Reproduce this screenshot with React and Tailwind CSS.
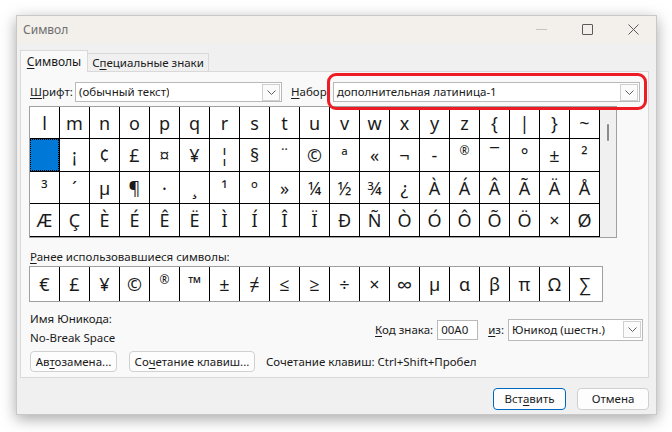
import React from "react";

const rows = [
  ["l", "m", "n", "o", "p", "q", "r", "s", "t", "u", "v", "w", "x", "y", "z", "{", "|", "}", "~"],
  ["", "¡", "¢", "£", "¤", "¥", "¦", "§", "¨", "©", "ª", "«", "¬", "-", "®", "¯", "°", "±", "²"],
  ["³", "´", "µ", "¶", "·", "¸", "¹", "º", "»", "¼", "½", "¾", "¿", "À", "Á", "Â", "Ã", "Ä", "Å"],
  ["Æ", "Ç", "È", "É", "Ê", "Ë", "Ì", "Í", "Î", "Ï", "Ð", "Ñ", "Ò", "Ó", "Ô", "Õ", "Ö", "×", "Ø"],
];

const recent = ["€", "£", "¥", "©", "®", "™", "±", "≠", "≤", "≥", "÷", "×", "∞", "µ", "α", "β", "π", "Ω", "∑"];

const rowHeights = ["h-[32px]", "h-[33px]", "h-[32px]", "h-[33px]"];

function Chevron() {
  return (
    <svg width="9" height="5" viewBox="0 0 9 5">
      <path d="M0.5 0.5L4.5 4.5L8.5 0.5" stroke="#606060" fill="none" strokeWidth="1" />
    </svg>
  );
}

function Select({ text, className }) {
  return (
    <div className={`h-[20px] border border-[#b9b9b9] bg-white flex items-center ${className}`}>
      <span className="pl-[3px] truncate">{text}</span>
      <div className="ml-auto mr-px h-[17px] w-[18px] border border-[#cfcfcf] bg-[#fbfbfb] flex items-center justify-center">
        <Chevron />
      </div>
    </div>
  );
}

function Btn({ children, className }) {
  return (
    <div className={`h-[21px] border border-[#d0d0d0] bg-[#fdfdfd] rounded-[4px] flex items-center justify-center ${className}`}>
      {children}
    </div>
  );
}

// small raised glyphs (Segoe UI draws these small)
function Glyph({ ch }) {
  if (ch === "®") return <span className="text-[12px] -translate-y-[4px]">®</span>;
  if (ch === "™") return <span className="text-[17px] font-bold -translate-y-[2px]">™</span>;
  if (ch === "∞") return <span className="text-[22px]">∞</span>;
  return ch;
}

export default function App() {
  return (
    <div
      className="w-[672px] h-[432px] bg-white pt-[15px] pl-[16px] text-[11.5px] text-[#1a1a1a]"
      style={{ fontFamily: '"Noto Sans", "Open Sans", sans-serif' }}
    >
      <div className="w-[641px] h-[400px] bg-[#f0f0f0] border border-[#c8c8c8] shadow-[0_4px_14px_rgba(0,0,0,0.35)] flex flex-col">
        {/* title bar */}
        <div className="h-[27px] bg-[#f3f0eb] flex items-center pl-[6px]">
          <span className="text-[#6d6d6d] text-[12px]">Символ</span>
          <div className="ml-auto flex items-center">
            <div className="w-[46px] flex justify-center">
              <div className="w-[11px] h-px bg-[#c4c4c4]" />
            </div>
            <div className="w-[46px] flex justify-center">
              <div className="w-[11px] h-[11px] border border-[#5a5a5a] rounded-[1px]" />
            </div>
            <div className="w-[46px] flex justify-center">
              <svg width="11" height="11" viewBox="0 0 11 11">
                <path d="M0.5 0.5L10.5 10.5M10.5 0.5L0.5 10.5" stroke="#5a5a5a" strokeWidth="1" />
              </svg>
            </div>
          </div>
        </div>

        {/* tabs */}
        <div className="mt-[7px] ml-[3px] flex items-end">
          <div className="h-[22px] w-[68px] bg-[#f9f9f9] border border-b-0 border-[#d9d9d9] flex items-center justify-center relative z-10 -mb-px text-[12px]">
            <span><span className="underline underline-offset-2">С</span>имволы</span>
          </div>
          <div className="h-[18px] w-[121px] bg-[#f0f0f0] border border-b-0 border-l-0 border-[#d9d9d9] flex items-center justify-center">
            <span>С<span className="underline underline-offset-2">п</span>ециальные знаки</span>
          </div>
        </div>

        {/* panel */}
        <div className="ml-[3px] w-[629px] h-[307px] bg-[#f9f9f9] border border-[#d9d9d9] pl-[8px] flex flex-col">
          <div className="mt-[10px] flex items-center">
            <span className="w-[46px] pl-px"><span className="underline underline-offset-2">Ш</span>рифт:</span>
            <Select text="(обычный текст)" className="w-[207px]" />
            <span className="ml-[9px] w-[42px]"><span className="underline underline-offset-2">Н</span>абор:</span>
            <div className="relative">
              <div className="absolute -left-[6px] -right-[7px] -top-[9px] -bottom-[8px] border-[3px] border-[#ee1c24] rounded-[9px]" />
              <Select text="дополнительная латиница-1" className="w-[307px]" />
            </div>
          </div>

          {/* char grid */}
          <div className="mt-[4px] w-[588px] border border-[#a0a0a0] flex bg-white">
            <div className="flex flex-col">
              {rows.map((row, ri) => (
                <div key={ri} className={`flex ${rowHeights[ri]}`}>
                  {row.map((ch, ci) => (
                    <div
                      key={ci}
                      className="w-[30px] h-full border-r border-b border-black flex items-center justify-center text-[18px] leading-none"
                    >
                      {ri === 1 && ci === 0 ? (
                        <div className="w-full h-full border border-dotted border-black bg-[#0078d7]" />
                      ) : (
                        <Glyph ch={ch} />
                      )}
                    </div>
                  ))}
                </div>
              ))}
            </div>
            <div className="flex-1 bg-[#f0f0f0] flex justify-center pt-[17px]">
              <div className="w-[2px] h-[17px] bg-[#8a8a8a] rounded-full" />
            </div>
          </div>

          <div className="mt-[11px] pl-px h-[16px] leading-[16px]">
            <span className="underline underline-offset-2">Р</span>анее использовавшиеся символы:
          </div>
          <div className="mt-[1px] w-[574px] h-[36px] border border-[#a0a0a0] bg-white flex">
            {recent.map((ch, i) => (
              <div
                key={i}
                className={`w-[30px] h-full flex items-center justify-center text-[18px] leading-none ${i < recent.length - 1 ? "border-r border-black" : ""}`}
              >
                <Glyph ch={ch} />
              </div>
            ))}
          </div>

          <div className="flex">
            <div className="pl-px flex flex-col">
              <div className="mt-[9px] h-[16px] leading-[16px]">Имя Юникода:</div>
              <div className="mt-[3px] h-[16px] leading-[16px]">No-Break Space</div>
            </div>
            <div className="ml-auto mr-[5px] mt-[17px] flex items-center h-[21px]">
              <span><span className="underline underline-offset-2">К</span>од знака:</span>
              <div className="ml-[4px] w-[41px] h-[20px] border border-[#b9b9b9] bg-white flex items-center pl-[3px]">00A0</div>
              <span className="ml-[10px]"><span className="underline underline-offset-2">и</span>з:</span>
              <Select text="Юникод (шестн.)" className="ml-[4px] w-[135px] h-[22px]" />
            </div>
          </div>

          <div className="mt-[5px] pl-px flex items-center">
            <Btn className="w-[87px]">
              <span>Ав<span className="underline underline-offset-2">т</span>озамена...</span>
            </Btn>
            <Btn className="ml-[12px] w-[126px]">
              <span>Со<span className="underline underline-offset-2">ч</span>етание клавиш...</span>
            </Btn>
            <span className="ml-[11px]">Сочетание клавиш: Ctrl+Shift+Пробел</span>
          </div>
        </div>

        {/* footer buttons */}
        <div className="mt-[10px] mr-[7px] flex justify-end">
          <div className="w-[73px] h-[22px] border border-[#0067c0] bg-[#fdfdfd] rounded-[4px] flex items-center justify-center">
            <span>Вст<span className="underline underline-offset-2">а</span>вить</span>
          </div>
          <div className="ml-[11px] w-[72px] h-[22px] border border-[#d0d0d0] bg-[#fdfdfd] rounded-[4px] flex items-center justify-center">
            Отмена
          </div>
        </div>
      </div>
    </div>
  );
}
